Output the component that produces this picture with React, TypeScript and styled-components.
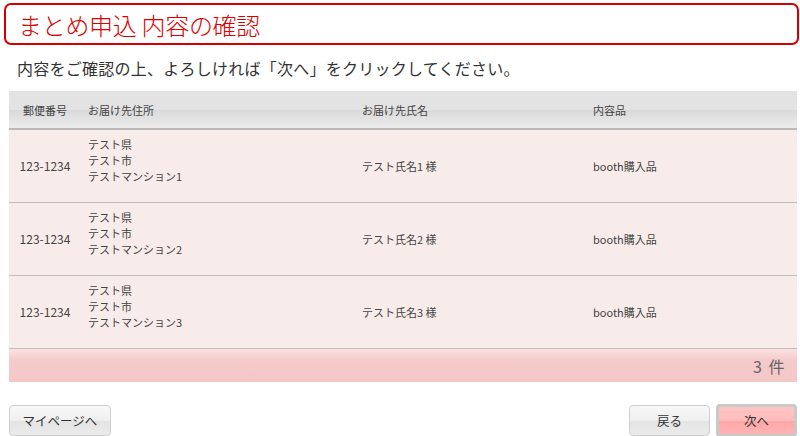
import styled, { createGlobalStyle } from "styled-components";

type Order = {
  zip: string;
  address: string[];
  name: string;
  item: string;
};

const orders: Order[] = [1, 2, 3].map((n) => ({
  zip: "123-1234",
  address: ["テスト県", "テスト市", `テストマンション${n}`],
  name: `テスト氏名${n} 様`,
  item: "booth購入品",
}));

const GlobalStyle = createGlobalStyle`
  body {
    margin: 0;
    background: #fff;
    font-family: Meiryo, "Noto Sans CJK JP", "Noto Sans", sans-serif;
    color: #333;
  }
`;

const Page = styled.div`
  width: 800px;
  height: 436px;
  padding: 3px 1px 0 4px;
  box-sizing: border-box;
  overflow: hidden;
`;

const TitleBox = styled.h1`
  margin: 0;
  height: 42px;
  box-sizing: border-box;
  border: 2px solid #d40000;
  border-radius: 7px;
  padding: 0 12px;
  display: flex;
  align-items: center;
  font-size: 24px;
  font-weight: 300;
  color: #e00000;
  letter-spacing: -0.3px;
`;

const Lead = styled.p`
  margin: 0;
  padding: 12px 0 0 13px;
  height: 46px;
  box-sizing: border-box;
  font-size: 16px;
  line-height: 22px;
  color: #333;
  letter-spacing: 0.25px;
`;

const Table = styled.div`
  margin-left: 5px;
  width: 788px;
  font-size: 11px;
  color: #444;
`;

const cols = "72px 274px 231px 1fr";

const HeadRow = styled.div`
  display: grid;
  grid-template-columns: ${cols};
  height: 39px;
  align-items: center;
  background: linear-gradient(#e3e3e3 0%, #e3e3e3 50%, #d9d9d9 51%, #ececec 100%);
  border-bottom: 2px solid #b9b9b9;
  box-sizing: border-box;
`;

const Row = styled.div`
  display: grid;
  grid-template-columns: ${cols};
  height: 73px;
  align-items: center;
  background: #f8ecea;
  border-bottom: 1px solid #c4bcbb;
  box-sizing: border-box;
  &:last-of-type {
    border-bottom-color: #a9a4a3;
  }
`;

const Cell = styled.div<{ $center?: boolean }>`
  padding: ${(p) => (p.$center ? "0" : "0 7px")};
  text-align: ${(p) => (p.$center ? "center" : "left")};
  line-height: 16px;
`;

const ZipCell = styled(Cell)`
  font-size: 12px;
`;

const AddressCell = styled(Cell)`
  align-self: start;
  padding-top: 6px;
`;

const Footer = styled.div`
  height: 33px;
  display: flex;
  align-items: center;
  justify-content: flex-end;
  padding-right: 11px;
  background: linear-gradient(#fbe1e1 0%, #f5caca 35%, #f5c8c8 100%);
  font-size: 16px;
  color: #666;
  letter-spacing: 1.5px;
`;

const Actions = styled.div`
  display: flex;
  align-items: center;
  gap: 6px;
  margin: 22px 0 0 5px;
  width: 788px;
`;

const Spacer = styled.div`
  flex: 1;
`;

const Button = styled.button<{ $primary?: boolean }>`
  font-family: inherit;
  font-size: 12.5px;
  color: #333;
  height: ${(p) => (p.$primary ? "33px" : "31px")};
  width: 81px;
  padding: 0;
  border-radius: 4px;
  border: ${(p) => (p.$primary ? "3px solid #c9c9c9" : "1px solid #cfcfcf")};
  background: ${(p) =>
    p.$primary
      ? "linear-gradient(#ffc4c4 0%, #ffbcbc 50%, #ffa6a6 52%, #ffb4b4 100%)"
      : "linear-gradient(#f8f8f8 0%, #efefef 50%, #e4e4e4 52%, #ebebeb 100%)"};
  cursor: pointer;
`;

const WideButton = styled(Button)`
  width: 102px;
`;

export default function App() {
  return (
    <Page>
      <GlobalStyle />
      <TitleBox>まとめ申込 内容の確認</TitleBox>
      <Lead>内容をご確認の上、よろしければ「次へ」をクリックしてください。</Lead>
      <Table>
        <HeadRow>
          <Cell $center>郵便番号</Cell>
          <Cell>お届け先住所</Cell>
          <Cell>お届け先氏名</Cell>
          <Cell>内容品</Cell>
        </HeadRow>
        {orders.map((o, i) => (
          <Row key={i}>
            <ZipCell $center>{o.zip}</ZipCell>
            <AddressCell>
              {o.address.map((line) => (
                <div key={line}>{line}</div>
              ))}
            </AddressCell>
            <Cell>{o.name}</Cell>
            <Cell>{o.item}</Cell>
          </Row>
        ))}
        <Footer>3 件</Footer>
      </Table>
      <Actions>
        <WideButton>マイページへ</WideButton>
        <Spacer />
        <Button>戻る</Button>
        <Button $primary>次へ</Button>
      </Actions>
    </Page>
  );
}
